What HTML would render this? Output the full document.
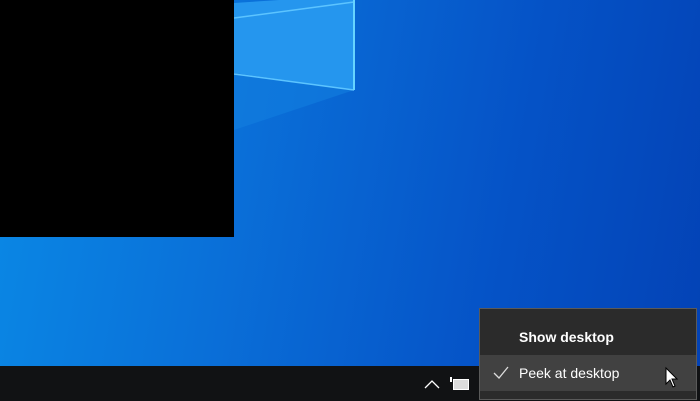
<!DOCTYPE html>
<html><head><meta charset="utf-8"><style>
html,body{margin:0;padding:0}
body{width:700px;height:401px;overflow:hidden;position:relative;font-family:"Segoe UI","Liberation Sans",sans-serif;
background:linear-gradient(100deg,#0a8ae6 0%,#0a6fd8 35%,#0553c7 70%,#0342b5 100%);}
.blk{position:absolute;left:0;top:0;width:234px;height:237px;background:#000}
.tb{position:absolute;left:0;top:366px;width:700px;height:35px;background:#111214}
.menu{position:absolute;left:479px;top:308px;width:218px;height:92px;background:#2b2b2b;border:1px solid #5a5a5a;box-sizing:border-box}
.it{position:absolute;left:0;width:216px;height:36px;color:#fff;font-size:14px;line-height:36px}
.hov{background:#414141}
</style></head><body>
<svg width="700" height="401" style="position:absolute;left:0;top:0">
<polygon points="234,3 354,-5 354,90 234,73" fill="#2596ee"/>
<polygon points="234,73 354,90 234,130" fill="#137fe0" opacity="0.6"/>
<line x1="234" y1="18" x2="354" y2="2" stroke="#5cc4ff" stroke-width="1.5"/>
<line x1="234" y1="74" x2="354" y2="90" stroke="#5cc4ff" stroke-width="1.5"/>
<line x1="354" y1="0" x2="354" y2="90" stroke="#66d4ff" stroke-width="2"/>
</svg>
<div class="blk"></div>
<div class="tb">
<svg width="700" height="35" style="position:absolute;left:0;top:0">
<polyline points="425,22 432,15 439,22" fill="none" stroke="#fff" stroke-width="1.3"/>
<rect x="453.5" y="13.5" width="15" height="10" fill="#ddd" stroke="#fff"/>
<rect x="450" y="11" width="2" height="5" fill="#fff"/>
</svg>
</div>
<div class="menu">
<div class="it" style="top:10px;font-weight:bold;padding-left:39px;box-sizing:border-box">Show desktop</div>
<div class="it hov" style="top:46px;padding-left:39px;box-sizing:border-box">Peek at desktop</div>
<svg width="216" height="92" style="position:absolute;left:0;top:0">
<polyline points="14,64 19,69 28,58" fill="none" stroke="#ddd" stroke-width="1.3"/>
<path d="M186,59 L186,75 L190,71 L193,78 L195,77 L192,70 L197,70 Z" fill="#fff" stroke="#000" stroke-width="1"/>
</svg>
</div>
</body></html>
